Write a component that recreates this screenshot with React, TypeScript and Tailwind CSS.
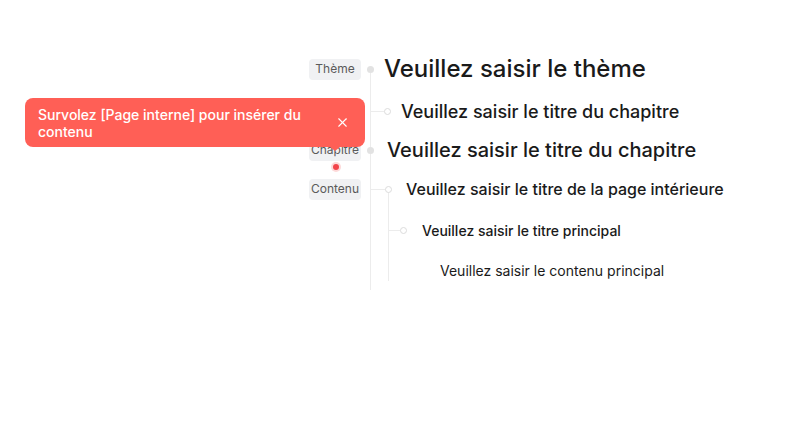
import { X } from "lucide-react";

const font = { fontFamily: "Inter, 'Noto Sans', sans-serif" };

function Badge({ label }: { label: string }) {
  return (
    <div className="flex h-[21px] w-[52px] shrink-0 items-center justify-center rounded-[4px] bg-[#f0f1f3] text-[12px] text-[#5a5a5a]">
      {label}
    </div>
  );
}

function FilledDot() {
  return <div className="h-[7px] w-[7px] shrink-0 rounded-full bg-[#e2e2e2]" />;
}

function RingDot() {
  return <div className="h-[7px] w-[7px] shrink-0 rounded-full border border-[#dcdcdc] bg-white" />;
}

export default function App() {
  return (
    <div className="relative h-[442px] w-full overflow-hidden bg-white text-[#1a1a1a]" style={font}>
      <div className="pl-[309px] pt-[49px]">
        <div className="relative">
          {/* main trunk */}
          <div className="absolute bottom-[1px] left-[61px] top-[20px] w-px bg-[#ececec]" />

          <div className="relative flex h-[40px] items-center">
            <Badge label="Thème" />
            <div className="ml-[6px] flex items-center">
              <FilledDot />
              <span className="ml-[10px] text-[24px] font-medium">Veuillez saisir le thème</span>
            </div>
          </div>

          <div className="relative flex h-[44px] items-center">
            <div className="w-[52px] shrink-0" />
            <div className="ml-[9px] flex items-center">
              <div className="h-px w-[14px] bg-[#ececec]" />
              <RingDot />
              <span className="ml-[10px] text-[18px] font-medium">Veuillez saisir le titre du chapitre</span>
            </div>
          </div>

          <div className="relative flex h-[34px] items-center">
            <Badge label="Chapitre" />
            <div className="ml-[6px] flex items-center">
              <FilledDot />
              <span className="ml-[13px] text-[20px] font-medium">Veuillez saisir le titre du chapitre</span>
            </div>
          </div>

          <div className="relative">
            {/* sub trunk */}
            <div className="absolute bottom-[10px] left-[79px] top-[22px] w-px bg-[#ececec]" />

            <div className="relative flex h-[44px] items-center">
              <Badge label="Contenu" />
              <div className="ml-[9px] flex items-center">
                <div className="h-px w-[15px] bg-[#ececec]" />
                <RingDot />
                <span className="ml-[14px] text-[16px] font-medium">Veuillez saisir le titre de la page intérieure</span>
              </div>
            </div>

            <div className="relative flex h-[38px] items-center">
              <div className="w-[52px] shrink-0" />
              <div className="ml-[27px] flex items-center">
                <div className="h-px w-[12px] bg-[#ececec]" />
                <RingDot />
                <span className="ml-[15px] text-[14px] font-medium">Veuillez saisir le titre principal</span>
              </div>
            </div>

            <div className="relative flex h-[42px] items-center">
              <div className="w-[52px] shrink-0" />
              <span className="ml-[79px] text-[14px]">Veuillez saisir le contenu principal</span>
            </div>
          </div>
        </div>
      </div>

      {/* hotspot dot */}
      <div className="absolute left-[331px] top-[162px] flex h-[10px] w-[10px] items-center justify-center rounded-full bg-[#fdd9d9]">
        <div className="h-[6px] w-[6px] rounded-full bg-[#f2444a]" />
      </div>

      {/* tooltip */}
      <div className="absolute left-[25px] top-[98px] flex h-[49px] w-[340px] items-center rounded-[8px] bg-[#ff5f56] pl-[13px] pr-[15px] text-white">
        <p className="flex-1 text-[14px] font-medium leading-[17px]">
          Survolez [Page interne] pour insérer du
          <br />
          contenu
        </p>
        <X size={15} strokeWidth={1.75} className="shrink-0" />
        <div className="absolute left-[305px] top-full h-0 w-0 border-x-[5px] border-t-[4px] border-x-transparent border-t-[#ff5f56]" />
      </div>
    </div>
  );
}
